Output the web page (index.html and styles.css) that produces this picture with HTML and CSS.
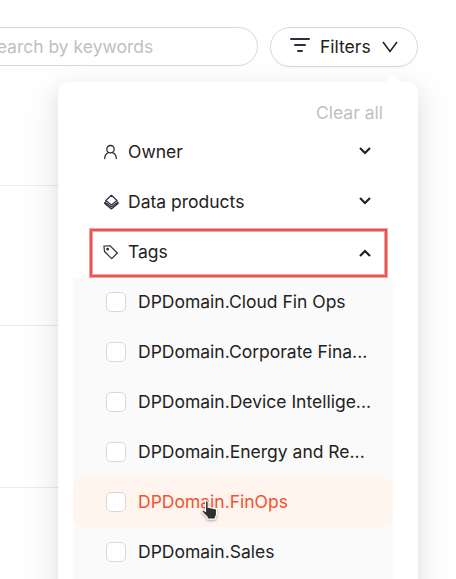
FILE: index.html
```html
<!DOCTYPE html>
<html lang="en">
<head>
<meta charset="utf-8">
<title>Filters</title>
<link rel="stylesheet" href="styles.css">
</head>
<body>
<header class="toolbar">
  <div class="search">Search by keywords</div>
  <button class="filters">
    <svg class="filters-icon" width="20" height="16" viewBox="0 0 20 16" fill="none" stroke="#292f3b" stroke-width="2" stroke-linecap="round"><path d="M1 2H19M5 8H15M8 14H12"/></svg>
    <span>Filters</span>
    <svg class="filters-arrow" width="16" height="12" viewBox="0 0 16 12" fill="none" stroke="#222" stroke-width="1.6"><path d="M1 1L8 10.5L15 1"/></svg>
  </button>
</header>
<main class="results">
  <div class="result"></div>
  <div class="result result-first"></div>
  <div class="result result-second"></div>
</main>
<aside class="dropdown">
  <div class="clear">Clear all</div>
  <div class="group">
    <svg class="group-icon" width="16" height="16" viewBox="0 0 16 16" fill="none" stroke="#292f3b" stroke-width="1.3" stroke-linecap="round"><circle cx="7.5" cy="5.2" r="3.7"/><path d="M1.7 14.5C1.7 11.8 3 9.5 5.5 8.6M13.3 14.5C13.3 11.8 12 9.5 9.5 8.6"/></svg>
    <span>Owner</span>
    <svg class="chevron" width="12" height="8" viewBox="0 0 12 8"><path d="M1 1L6 6L11 1"/></svg>
  </div>
  <div class="group">
    <svg class="group-icon" width="16" height="16" viewBox="0 0 16 16" fill="none" stroke="#292f3b" stroke-width="1.2" stroke-linejoin="round"><path d="M8.4 1.3L14 6.5L8.4 11L2.8 6.5Z"/><path d="M3 7.5L1.5 9.2L8.4 15L15.3 9.2L13.8 7.5M2.5 8.5L8.4 13L14.3 8.5" stroke-width="1.2"/></svg>
    <span>Data products</span>
    <svg class="chevron" width="12" height="8" viewBox="0 0 12 8"><path d="M1 1L6 6L11 1"/></svg>
  </div>
  <div class="group group-open">
    <svg class="group-icon" width="16" height="16" viewBox="0 0 16 16" fill="none" stroke="#292f3b" stroke-width="1.2" stroke-linejoin="round"><path d="M.9 2L7.2 1.8L14.3 9L8.7 14.6L1.5 7.5Z"/><circle cx="4.6" cy="5.2" r=".8" fill="#292f3b"/></svg>
    <span>Tags</span>
    <svg class="chevron chevron-up" width="12" height="8" viewBox="0 0 12 8"><path d="M1 1L6 6L11 1"/></svg>
  </div>
  <div class="options">
    <div class="option"><i class="box"></i><span class="label">DPDomain.Cloud Fin Ops</span></div>
    <div class="option"><i class="box"></i><span class="label">DPDomain.Corporate Fina...</span></div>
    <div class="option"><i class="box"></i><span class="label">DPDomain.Device Intellige...</span></div>
    <div class="option"><i class="box"></i><span class="label">DPDomain.Energy and Re...</span></div>
    <div class="option option-hover"><i class="box"></i><span class="label">DPDomain.FinOps</span>
      <svg class="cursor" width="18" height="21" viewBox="0 0 16 20" preserveAspectRatio="none" fill="#303030" stroke="#fff" stroke-width="1" stroke-linejoin="round"><path d="M4 10V2.2Q4 .7 5.2 .7T6.4 2.2V7.2Q8 6.5 8.8 7.7Q10.5 7.1 11.3 8.2Q13.7 7.5 13.8 10V13.3Q13.8 15 12.8 16.2V18.2H5.5V16.3L1.2 11.6Q.4 10.4 1.4 9.7Q2.4 9 4 11Z"/></svg>
    </div>
    <div class="option"><i class="box"></i><span class="label">DPDomain.Sales</span></div>
  </div>
</aside>
</body>
</html>
```
FILE: styles.css
```css
*,
*::before,
*::after {
  box-sizing: border-box;
}

body {
  position: relative;
  width: 456px;
  height: 579px;
  margin: 0;
  overflow: hidden;
  background: #fff;
  color: #222;
  font: 17.5px/28px Inter, sans-serif;
}

.toolbar {
  display: flex;
  align-items: flex-start;
  gap: 12px;
  height: 86px;
  padding-top: 27px;
}

.search {
  width: 278px;
  height: 39px;
  margin-left: -20px;
  padding: 5px 0 0 4.5px;
  border: 1px solid #d9d9d9;
  border-radius: 20px;
  color: #bfbfbf;
}

.filters {
  display: flex;
  align-items: center;
  width: 148px;
  height: 40px;
  padding: 0 0 0 19px;
  border: 1px solid #d9d9d9;
  border-radius: 20px;
  background: #fff;
  box-shadow: 0 2px 0 rgba(0, 0, 0, .02);
  color: #222;
  font: inherit;
}

.filters-icon {
  margin: -4px 10px 0 0;
}

.filters-arrow {
  margin-left: 11px;
}

.result {
  width: 418px;
  height: 100px;
  border-bottom: 1px solid #ebebeb;
}

.result-first {
  height: 140px;
}

.result-second {
  height: 162px;
}

.dropdown {
  position: absolute;
  top: 82px;
  left: 58px;
  width: 360px;
  height: 560px;
  padding: 17px 25px 0 15px;
  border-radius: 10px;
  background: #fff;
  box-shadow:
    0 7.5px 20px rgba(0, 0, 0, .08),
    0 3.75px 7.5px -5px rgba(0, 0, 0, .12),
    0 11.25px 35px 10px rgba(0, 0, 0, .05);
}

.dropdown::before {
  content: "";
  position: absolute;
  top: -7px;
  right: 16px;
  width: 18px;
  height: 8px;
  background: #fff;
  clip-path: polygon(0 100%, 39% 15%, 50% 0, 61% 15%, 100% 100%);
}

.clear {
  padding-right: 10px;
  color: #bfbfbf;
  text-align: right;
}

.group {
  display: flex;
  align-items: center;
  width: 320px;
  height: 50px;
  padding: 0 22px 0 30px;
}

.group-icon {
  margin-right: 9px;
}

.group-open {
  position: relative;
  z-index: 1;
}

.group-open::after {
  content: "";
  position: absolute;
  top: 2px;
  left: 17px;
  width: 297px;
  height: 48px;
  border: 2px solid #ea5350;
  box-shadow: 0 0 0 1px #f5a4a3, inset 0 0 0 1px #f5a4a3;
}

.chevron {
  margin: -2px 0 0 auto;
  fill: none;
  stroke: #222;
  stroke-width: 2.2;
}

.chevron-up {
  margin-top: 2px;
  transform: rotate(180deg);
}

.options {
  width: 320px;
  padding-bottom: 5px;
  background: #fafafa;
}

.option {
  display: flex;
  align-items: center;
  gap: 12px;
  height: 50px;
  padding-left: 33px;
}

.box {
  width: 20px;
  height: 20px;
  border: 1px solid #d9d9d9;
  border-radius: 5px;
  background: #fff;
}

.label {
  white-space: nowrap;
}

.option-hover {
  position: relative;
  border-radius: 10px;
  background: #fff5ee;
  color: #f4512c;
}

.cursor {
  position: absolute;
  top: 23px;
  left: 128px;
  filter: drop-shadow(0 1px 1px rgba(0, 0, 0, .35));
}
```
